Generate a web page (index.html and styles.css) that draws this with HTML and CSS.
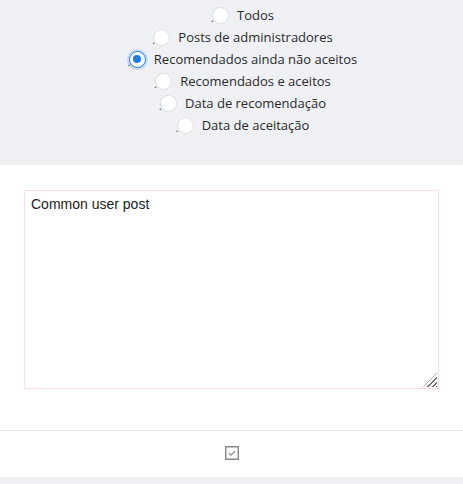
FILE: index.html
```html
<!DOCTYPE html>
<html lang="pt">
<head>
<meta charset="utf-8">
<link rel="stylesheet" href="styles.css">
</head>
<body>
<div class="filters">
  <label class="row"><span class="dot">.</span><span class="radio"></span><span class="text">Todos</span></label>
  <label class="row"><span class="dot">.</span><span class="radio"></span><span class="text">Posts de administradores</span></label>
  <label class="row"><span class="dot">.</span><span class="radio checked"></span><span class="text">Recomendados ainda não aceitos</span></label>
  <label class="row"><span class="dot">.</span><span class="radio"></span><span class="text">Recomendados e aceitos</span></label>
  <label class="row"><span class="dot">.</span><span class="radio"></span><span class="text">Data de recomendação</span></label>
  <label class="row"><span class="dot">.</span><span class="radio"></span><span class="text">Data de aceitação</span></label>
</div>
<div class="editor">
  <div class="wrap">
    <textarea class="post">Common user post</textarea>
    <span class="grip"></span>
  </div>
</div>
<div class="footer">
  <svg class="check" width="14" height="14" viewBox="0 0 14 14">
    <rect x="0.75" y="0.75" width="12.5" height="12.5" fill="none" stroke="#8a8a8a" stroke-width="1.5"/>
    <path d="M4 7.2 L6 9.2 L10 5" fill="none" stroke="#8a8a8a" stroke-width="1.2"/>
  </svg>
</div>
<div class="bottom"></div>
</body>
</html>
```
FILE: styles.css
```css
html, body {
  margin: 0;
  padding: 0;
  background: #ffffff;
}
body {
  width: 463px;
  height: 484px;
  overflow: hidden;
  font-family: "Open Sans", "Noto Sans", sans-serif;
}
.filters {
  background: #eff0f4;
  padding: 4px 0 29px;
  height: 132px;
  display: flex;
  flex-direction: column;
  align-items: center;
}
.row {
  height: 22px;
  display: flex;
  align-items: center;
  padding-left: 22px;
  font-size: 13px;
  color: #2a2a2a;
}
.dot {
  font-size: 10px;
  width: 2px;
  margin-right: -1px;
  color: #333;
  line-height: 1;
  align-self: center;
  padding-top: 6px;
}
.radio {
  box-sizing: border-box;
  width: 17px;
  height: 17px;
  border-radius: 50%;
  background: #fff;
  border: 1px solid #dedede;
  margin-right: 8px;
  position: relative;
}
.radio.checked {
  border: 1.5px solid #1a7cf0;
  box-shadow: 0 0 0 2px rgba(26,124,240,0.18);
}
.radio.checked::after {
  content: "";
  position: absolute;
  left: 50%;
  top: 50%;
  width: 8px;
  height: 8px;
  margin: -4px 0 0 -4px;
  border-radius: 50%;
  background: #1a7cf0;
}
.editor {
  padding: 25px 24px 41px;
}
.wrap {
  position: relative;
  width: 415px;
  height: 199px;
}
.post {
  display: block;
  box-sizing: border-box;
  width: 415px;
  height: 199px;
  margin: 0;
  border: 1px solid #fddde0;
  padding: 5px 6px;
  font-family: "Liberation Sans", Arial, sans-serif;
  font-size: 14px;
  color: #222;
  background: #fff;
  outline: none;
  resize: none;
}
.grip {
  position: absolute;
  right: 2px;
  bottom: 2px;
  width: 14px;
  height: 14px;
  background: repeating-linear-gradient(135deg, transparent 0 2px, #707070 2px 3.4px);
  clip-path: polygon(100% 0, 100% 100%, 0 100%);
}
.footer {
  border-top: 1px solid #ebebeb;
  height: 46px;
  display: flex;
  align-items: center;
  justify-content: center;
}
.check {
  display: block;
  margin-top: -2px;
}
.bottom {
  background: #eff0f4;
  height: 7px;
}
```
